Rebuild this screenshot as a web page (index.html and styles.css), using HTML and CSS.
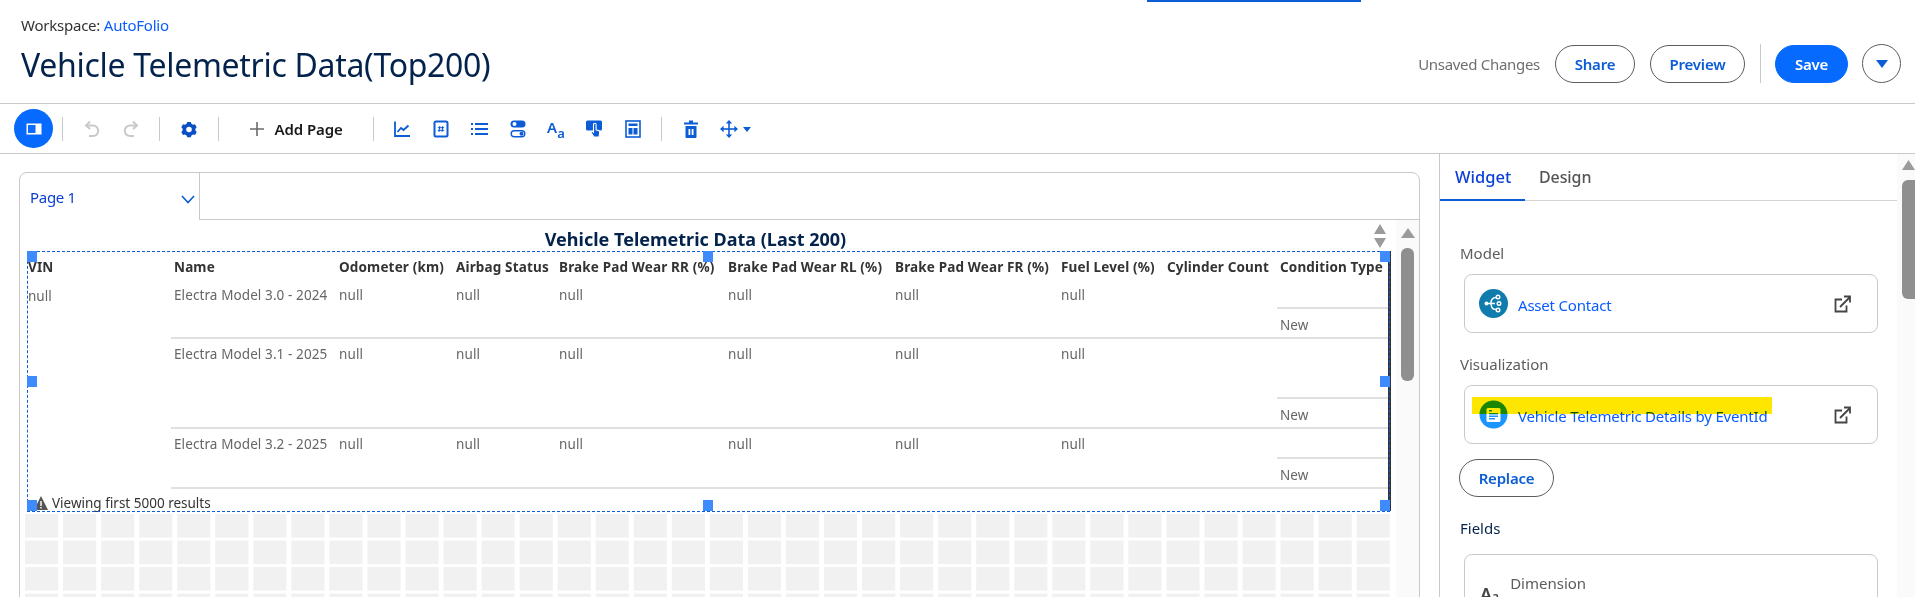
FILE: index.html
```html
<!DOCTYPE html>
<html>
<head>
<title>Vehicle Telemetric Data(Top200)</title>
<link rel="stylesheet" href="styles.css">
</head>
<body>
<div class="top-strip"></div>

<header class="header">
  <div class="heading">
    <div class="workspace">Workspace: <a class="link">AutoFolio</a></div>
    <h1 class="title">Vehicle Telemetric Data(Top200)</h1>
  </div>
  <div class="actions">
    <span class="unsaved">Unsaved Changes</span>
    <button class="pill w-share">Share</button>
    <button class="pill w-preview">Preview</button>
    <span class="action-sep"></span>
    <button class="pill save">Save</button>
    <button class="round-more"><svg width="14" height="8" viewBox="0 0 14 8"><path d="M1 0h12L7 8z" fill="#0b5cd5"/></svg></button>
  </div>
</header>

<nav class="toolbar">
  <button class="panel-btn">
    <svg width="16" height="12" viewBox="0 0 16 12"><rect x="0.5" y="0.5" width="15" height="11" fill="#fff"/><rect x="2" y="2" width="7.5" height="8" fill="#0b6cff"/></svg>
  </button>
  <span class="sep first"></span>
  <button class="tool undo">
    <svg width="20" height="20" viewBox="0 0 20 20" fill="none" stroke="#c9c9c9" stroke-width="2"><path d="M8 2.500 4 6.500l4 3.500"/><path d="M4.500 6.500h6.500a4.600 4.600 0 0 1 0 10.500H7"/></svg>
  </button>
  <button class="tool undo">
    <svg width="20" height="20" viewBox="0 0 20 20" fill="none" stroke="#c9c9c9" stroke-width="2"><path d="M12 2.500l4 4-4 3.500"/><path d="M15.500 6.500H9a4.600 4.600 0 0 0 0 10.500h4"/></svg>
  </button>
  <span class="sep"></span>
  <button class="tool">
    <svg width="20" height="20" viewBox="0 0 20 20"><path fill="#0b4fc4" fill-rule="evenodd" d="M8.200 3h3.600l.6 1.800 1.700 1 1.900-.5 1.700 3-1.300 1.400v1.800l1.300 1.400-1.700 3-1.900-.5-1.700 1-.6 1.800H8.200l-.6-1.800-1.700-1-1.900.5-1.700-3 1.300-1.400V9.700L2.300 8.300l1.700-3 1.900.5 1.700-1zM10 7.700a2.800 2.800 0 1 0 0 5.600 2.800 2.800 0 0 0 0-5.600z"/></svg>
  </button>
  <span class="sep"></span>
  <button class="add-page">
    <svg width="16" height="16" viewBox="0 0 16 16"><path d="M8 1v14M1 8h14" stroke="#6b6b6b" stroke-width="1.600"/></svg>
    <span>Add Page</span>
  </button>
  <span class="sep flush"></span>
  <div class="tool-group">
    <button class="tool">
      <svg width="20" height="20" viewBox="0 0 20 20" fill="none" stroke="#0b5cd5" stroke-width="1.800"><path d="M3 2.500V17h15"/><path d="M5.500 13l3.500-4 2.500 2 5-4.500"/></svg>
    </button>
    <button class="tool">
      <svg width="20" height="20" viewBox="0 0 20 20" fill="none" stroke="#0b5cd5"><rect x="3.500" y="2.500" width="13" height="15" rx="1.500" stroke-width="2"/><path d="M8.800 7 8 13M11.800 7 11 13M6.800 8.700h6.400M6.800 11.300h6.400" stroke-width="1"/></svg>
    </button>
    <button class="tool">
      <svg width="20" height="20" viewBox="0 0 20 20" fill="#0b5cd5"><rect x="2" y="4" width="2" height="2"/><rect x="2" y="9" width="2" height="2"/><rect x="2" y="14" width="2" height="2"/><rect x="6" y="4" width="13" height="2"/><rect x="6" y="9" width="13" height="2"/><rect x="6" y="14" width="13" height="2"/></svg>
    </button>
    <button class="tool">
      <svg width="20" height="20" viewBox="0 0 20 20"><rect x="2.500" y="1.500" width="15" height="7" rx="3.500" fill="#0b5cd5"/><circle cx="6.500" cy="5" r="2" fill="#fff"/><rect x="3.200" y="11.700" width="13.600" height="6" rx="3" fill="none" stroke="#0b5cd5" stroke-width="1.400"/><circle cx="13.500" cy="14.700" r="2" fill="#0b5cd5"/></svg>
    </button>
    <button class="tool type-icon"><span class="big-a">A</span><span class="small-a">a</span></button>
    <button class="tool">
      <svg width="20" height="20" viewBox="0 0 20 20"><rect x="2" y="1.500" width="16" height="10" rx="1.500" fill="#0b5cd5"/><path d="M9.500 5.500a1.300 1.300 0 0 1 2.600 0v5.300l2.600.8c.7.200 1.100.9 1 1.600l-.6 4.800H10L6.800 13.200l1.300-1 1.400 1z" fill="#0b5cd5" stroke="#fff" stroke-width="1.100"/></svg>
    </button>
    <button class="tool">
      <svg width="20" height="20" viewBox="0 0 20 20"><rect x="3" y="2" width="14" height="16" fill="none" stroke="#0b5cd5" stroke-width="1.600"/><rect x="5.500" y="4.500" width="9" height="2.500" fill="#0b5cd5"/><rect x="5.500" y="9" width="4" height="6.500" fill="#0b5cd5"/><rect x="10.500" y="9" width="4" height="6.500" fill="#0b5cd5"/></svg>
    </button>
  </div>
  <span class="sep"></span>
  <button class="tool">
    <svg width="20" height="20" viewBox="0 0 20 20" fill="#0b5cd5"><path d="M8 1.500h4V3.500h5v2H3v-2h5z"/><path fill-rule="evenodd" d="M4.500 7h11v11a1 1 0 0 1-1 1h-9a1 1 0 0 1-1-1zM7.500 10v6h1.800v-6zM10.700 10v6h1.800v-6z"/></svg>
  </button>
  <button class="tool move">
    <svg width="20" height="20" viewBox="0 0 20 20" fill="#0b5cd5"><path d="M9.200 4h1.600v12H9.200z"/><path d="M4 9.200h12v1.600H4z"/><path d="M10 1l3.200 3.600H6.800zM10 19l-3.200-3.600h6.400zM1 10l3.600-3.200v6.400zM19 10l-3.600 3.200V6.800z"/></svg>
    <svg class="move-caret" width="8" height="5" viewBox="0 0 8 5"><path d="M0 0h8L4 5z" fill="#0b5cd5"/></svg>
  </button>
</nav>

<main class="main">
  <section class="canvas">
    <div class="card">
      <div class="tabs-row">
        <div class="page-tab">
          <span>Page 1</span>
          <svg width="14" height="9" viewBox="0 0 14 9" fill="none" stroke="#0b5cd5" stroke-width="1.600"><path d="M1 1l6 6.500L13 1"/></svg>
        </div>
        <div class="tab-rest"></div>
      </div>
      <div class="card-body">
        <div class="sheet">
          <div class="chart-title-row">
            <div class="chart-title">Vehicle Telemetric Data (Last 200)</div>
            <div class="stepper">
              <svg width="12" height="10" viewBox="0 0 12 10"><path d="M6 0l6 10H0z" fill="#9b9b9b"/></svg>
              <svg width="12" height="10" viewBox="0 0 12 10"><path d="M0 0h12L6 10z" fill="#9b9b9b"/></svg>
            </div>
          </div>

          <div class="widget">
            <div class="thead cols">
              <div>VIN</div><div>Name</div><div>Odometer (km)</div><div>Airbag Status</div>
              <div>Brake Pad Wear RR (%)</div><div>Brake Pad Wear RL (%)</div><div>Brake Pad Wear FR (%)</div>
              <div>Fuel Level (%)</div><div>Cylinder Count</div><div>Condition Type</div>
            </div>
            <div class="tbody">
              <div class="vin-cell">null</div>
              <div class="trow cols row-a">
                <div></div><div>Electra Model 3.0 - 2024</div><div>null</div><div>null</div><div>null</div><div>null</div><div>null</div><div>null</div><div></div>
                <div class="cond"><span class="cond-top"></span><span class="cond-val">New</span></div>
              </div>
              <div class="trow cols row-b">
                <div></div><div>Electra Model 3.1 - 2025</div><div>null</div><div>null</div><div>null</div><div>null</div><div>null</div><div>null</div><div></div>
                <div class="cond"><span class="cond-top"></span><span class="cond-val">New</span></div>
              </div>
              <div class="trow cols row-c">
                <div></div><div>Electra Model 3.2 - 2025</div><div>null</div><div>null</div><div>null</div><div>null</div><div>null</div><div>null</div><div></div>
                <div class="cond"><span class="cond-top"></span><span class="cond-val">New</span></div>
              </div>
            </div>
            <div class="limit-note">
              <svg width="14" height="14" viewBox="0 0 14 14"><path d="M7 0l7 14H0z" fill="#555"/><path d="M6.300 5h1.400v5H6.300zM6.300 11h1.400v1.500H6.300z" fill="#fff"/></svg>
              <span>Viewing first 5000 results</span>
            </div>
            <div class="selection"></div>
            <i class="handle tl"></i><i class="handle tc"></i><i class="handle tr"></i>
            <i class="handle ml"></i><i class="handle mr"></i>
            <i class="handle bl"></i><i class="handle bc"></i><i class="handle br"></i>
          </div>

          <div class="grid-paper"></div>
        </div>
        <div class="scroll-strip">
          <svg width="14" height="10" viewBox="0 0 14 10"><path d="M7 0l7 10H0z" fill="#9b9b9b"/></svg>
          <div class="thumb"></div>
        </div>
      </div>
    </div>
  </section>

  <aside class="sidebar">
    <div class="side-main">
      <div class="side-tabs">
        <span class="side-tab active">Widget</span>
        <span class="side-tab">Design</span>
      </div>
      <div class="side-body">
        <div class="label">Model</div>
        <div class="box">
          <svg class="box-icon" width="29" height="29" viewBox="0 0 29 29"><circle cx="14.500" cy="14.500" r="14.500" fill="#107cad"/><g fill="none" stroke="#fff" stroke-width="1.400"><path d="M8 14.500h8M12 14.500c0-4 2-6 5-6M12 14.500c0 4 2 6 5 6"/><circle cx="19" cy="8" r="1.800"/><circle cx="20" cy="14.500" r="1.800"/><circle cx="19" cy="21" r="1.800"/></g><circle cx="7.500" cy="14.500" r="2" fill="#fff"/></svg>
          <a class="box-link">Asset Contact</a>
          <svg class="ext" width="17" height="18" viewBox="0 0 17 18" fill="none" stroke="#444" stroke-width="1.800"><path d="M8 4.500H1.500V16.500H12.500V10.500"/><path d="M6 12 15.500 2.500M10 1.500h6v6"/></svg>
        </div>
        <div class="label">Visualization</div>
        <div class="box">
          <svg class="box-icon" width="29" height="29" viewBox="0 0 29 29"><circle cx="14.500" cy="14.500" r="14" fill="#1b96ff"/><rect x="7.500" y="8" width="14" height="14" rx="1.500" fill="#fff"/><g fill="#1b96ff"><rect x="10" y="10" width="3" height="1.500"/><rect x="10" y="13" width="9" height="1.500"/><rect x="10" y="15.500" width="9" height="1.500"/><rect x="10" y="18" width="6" height="1.500"/></g></svg>
          <a class="box-link">Vehicle Telemetric Details by EventId</a>
          <svg class="ext" width="17" height="18" viewBox="0 0 17 18" fill="none" stroke="#444" stroke-width="1.800"><path d="M8 4.500H1.500V16.500H12.500V10.500"/><path d="M6 12 15.500 2.500M10 1.500h6v6"/></svg>
          <span class="marker"></span>
        </div>
        <button class="pill replace">Replace</button>
        <div class="label fields">Fields</div>
        <div class="box dim-box">
          <span class="dim-icon">A<small>a</small></span>
          <span class="dim-label">Dimension</span>
        </div>
      </div>
    </div>
    <div class="side-scroll">
      <svg width="13" height="10" viewBox="0 0 13 10"><path d="M6.500 0 13 10H0z" fill="#9b9b9b"/></svg>
      <div class="thumb"></div>
    </div>
  </aside>
</main>
</body>
</html>
```

FILE: styles.css
```css
html, body { margin: 0; height: 597px; overflow: hidden; background: #fff; }
body { font-family: "Noto Sans", "Open Sans", sans-serif; color: #181818; font-size: 13px; }
button { font-family: inherit; background: none; border: 0; padding: 0; cursor: pointer; }
svg { display: block; }

.top-strip { width: 214px; height: 2px; margin-left: 1147px; background: #0b5cd5; }

/* header */
.header { display: flex; justify-content: space-between; height: 101px; border-bottom: 1px solid #c9c9c9; }
.heading { padding: 13px 0 0 21px; }
.workspace { font-size: 15px; line-height: 20px; letter-spacing: -.23px; color: #333; }
.link { color: #0b5cff; }
.title { margin: 8px 0 0; font-size: 32px; line-height: 44px; font-weight: 400; letter-spacing: -.3px; color: #03234d; }
.actions { display: flex; align-items: center; gap: 15px; height: 39px; margin-top: 42px; padding-right: 14px; }
.unsaved { font-size: 15px; letter-spacing: -.3px; color: #6f6f6f; }
.pill { height: 38px; border: 1px solid #5c5c5c; border-radius: 19px; color: #0b5cd5; font-size: 15px; font-weight: 600; letter-spacing: -.2px; background: #fff; }
.w-share { width: 80px; }
.w-preview { width: 95px; }
.action-sep { width: 1px; height: 39px; background: #c9c9c9; }
.save { width: 73px; margin-left: -1px; background: #066afe; border-color: #066afe; color: #fff; }
.round-more { width: 39px; height: 39px; margin-left: -1px; border: 1px solid #5c5c5c; border-radius: 50%; display: flex; align-items: center; justify-content: center; }

/* toolbar */
.toolbar { display: flex; align-items: center; height: 49px; padding-left: 14px; border-bottom: 1px solid #c9c9c9; }
.panel-btn { width: 39px; height: 39px; border-radius: 50%; background: #066afe; display: flex; align-items: center; justify-content: center; flex: none; }
.sep { width: 1px; height: 24px; margin: 0 9.5px; background: #c9c9c9; flex: none; }
.sep.first { margin: 0 10px 0 9px; }
.sep.flush { margin-left: 0; }
.tool { width: 38.4px; height: 38px; display: flex; align-items: center; justify-content: center; flex: none; }
.tool-group { display: flex; }
.add-page { display: flex; align-items: center; justify-content: flex-end; gap: 10px; width: 154px; padding-right: 30px; margin-left: -9.5px; box-sizing: border-box; flex: none; font-size: 15px; font-weight: 600; letter-spacing: -.1px; color: #181818; }
.type-icon { align-items: flex-end; color: #0b5cd5; padding-bottom: 8px; box-sizing: border-box; }
.big-a { font-size: 15px; line-height: 18px; font-weight: 600; margin-bottom: 4px; }
.small-a { font-size: 13px; line-height: 13px; font-weight: 600; }
.move { position: relative; }
.move-caret { position: absolute; left: 33px; top: 17px; }

/* main area */
.main { display: flex; height: 443px; overflow: hidden; }
.canvas { width: 1439px; flex: none; padding: 18px 0 0 19px; box-sizing: border-box; }
.card { width: 1401px; height: 500px; box-sizing: border-box; border: 1px solid #c9c9c9; border-radius: 8px 8px 0 0; }
.tabs-row { display: flex; height: 47px; }
.page-tab { width: 180px; display: flex; align-items: center; justify-content: space-between; padding: 1px 4px 0 10px; box-sizing: border-box; border-right: 1px solid #c9c9c9; color: #0b3fd5; font-size: 15px; letter-spacing: -.3px; }
.page-tab svg { margin-top: 4px; }
.tab-rest { flex: 1; border-bottom: 1px solid #c9c9c9; }
.card-body { display: flex; height: 450px; }
.sheet { width: 1376px; padding-left: 7px; box-sizing: border-box; flex: none; }
.scroll-strip { width: 23px; margin-left: auto; background: #fafafa; padding: 8px 0 0 5px; box-sizing: border-box; }
.scroll-strip .thumb { width: 13px; height: 133px; margin-top: 10px; border-radius: 6px; background: #8f8f8f; }

.chart-title-row { display: flex; height: 31px; width: 1363px; }
.chart-title { flex: 1; text-align: center; font-size: 18px; font-weight: 700; line-height: 39px; color: #03234d; }
.stepper { width: 26px; padding: 4px 0 0 6px; box-sizing: border-box; display: flex; flex-direction: column; align-items: center; gap: 4px; }
.stepper svg { flex: none; }

/* table widget */
.widget { position: relative; width: 1364px; height: 260px; box-sizing: border-box; border-right: 3px solid #333; }
.cols { display: grid; grid-template-columns: 144px 165px 117px 103px 169px 167px 166px 106px 113px 111px; }
.thead { height: 29px; padding-top: 8px; box-sizing: border-box; font-size: 13.5px; line-height: 17px; font-weight: 700; letter-spacing: .15px; color: #333; }
.thead > div { padding-left: 3px; white-space: nowrap; }
.thead > div:first-child { padding-left: 1px; }
.tbody { position: relative; }
.vin-cell { position: absolute; left: 1px; top: 8px; line-height: 17px; font-size: 13.5px; color: #666; }
.trow { box-sizing: border-box; border-bottom: 2px solid #e0e0e0; position: relative; font-size: 13.5px; line-height: 17px; letter-spacing: .1px; color: #666; }
.trow > div { padding: 7px 0 0 3px; white-space: nowrap; }
.trow::before { content: ""; position: absolute; left: 0; bottom: -2px; width: 144px; height: 2px; background: #fff; }
.row-a { height: 59px; }
.row-b { height: 90px; }
.row-c { height: 60px; }
.trow > .cond { display: flex; flex-direction: column; padding: 0; }
.cond-top { flex: 1; border-bottom: 2px solid #e0e0e0; }
.cond-val { height: 28px; padding: 8px 0 0 3px; box-sizing: border-box; }

.limit-note { display: flex; align-items: center; gap: 4px; height: 14px; margin: 7px 0 0 7px; font-size: 13.5px; color: #333; }
.selection { position: absolute; inset: 0 -2px -1px 0; border: 1px dashed #0b5cd5; }
.handle { position: absolute; width: 10px; height: 11px; background: #3d8bfd; }
.tl { left: 0; top: 0; }
.tc { left: 676px; top: 0; }
.tr { right: -2px; top: 0; }
.ml { left: 0; top: 125px; }
.mr { right: -2px; top: 125px; }
.bl { left: 0; bottom: 0; }
.bc { left: 676px; bottom: 0; }
.br { right: -2px; bottom: 0; }

.grid-paper {
  width: 1365px; height: 120px; margin: 3px 0 0 -2px;
  background:
    linear-gradient(90deg, transparent 33px, #fff 33px) 0 0 / 38.06px 100%,
    linear-gradient(transparent 24px, #fff 24px) 0 0 / 100% 26.5px,
    #f1f1f1;
}

/* right panel */
.sidebar { flex: 1; display: flex; border-left: 1px solid #c9c9c9; min-width: 0; }
.side-main { width: 457px; flex: none; }
.side-tabs { display: flex; height: 47px; box-sizing: border-box; border-bottom: 1px solid #d4d4d4; }
.side-tab { padding: 0 14px; line-height: 46px; font-size: 16px; font-weight: 500; letter-spacing: -.1px; color: #555; }
.side-tab.active { width: 85px; box-sizing: border-box; height: 47px; padding: 0 15px; border-bottom: 2px solid #0b5cd5; font-size: 16.5px; letter-spacing: 0; color: #0b3fd5; white-space: nowrap; }
.side-body { padding: 42px 19px 0 20px; }
.label { font-size: 15px; line-height: 20px; color: #5c5c5c; }
.label.fields { margin-top: 21px; color: #03234d; }
.box { position: relative; display: flex; align-items: center; width: 414px; height: 59px; margin: 11px 0 21px 4px; padding: 0 26px 0 14px; box-sizing: border-box; border: 1px solid #c9c9c9; border-radius: 8px; }
.box-icon { flex: none; margin-right: 10px; }
.box-link { flex: 1; padding-top: 3px; font-size: 15px; letter-spacing: -.2px; color: #0b5cff; }
.ext { flex: none; }
.marker { position: absolute; left: 7px; top: 11px; width: 300px; height: 17px; background: #ffe600; mix-blend-mode: multiply; }
.replace { display: block; width: 95px; margin: -6px 0 0 -1px; }
.dim-box { height: 100px; margin: 16px 0 0 4px; align-items: flex-start; padding: 18px 0 0 15px; }
.dim-icon { font-size: 18px; font-weight: 600; line-height: 24px; margin-top: 9px; color: #444; }
.dim-icon small { font-size: 12px; }
.dim-label { margin-left: 11px; font-size: 15px; line-height: 20px; color: #5c5c5c; }
.side-scroll { flex: 1; background: #fafafa; padding: 6px 0 0 5px; box-sizing: border-box; }
.side-scroll .thumb { width: 13px; height: 119px; margin-top: 10px; border-radius: 6px 0 0 6px; background: #8f8f8f; }
```
